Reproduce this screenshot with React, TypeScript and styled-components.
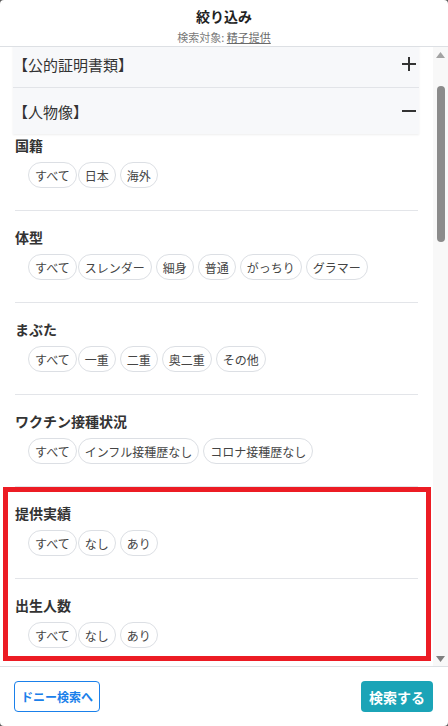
import React from "react";
import styled, { createGlobalStyle } from "styled-components";

const Global = createGlobalStyle`
  html, body { margin: 0; padding: 0; background: #5a5a5a; }
  body { font-family: "Noto Sans CJK JP", "Noto Sans", sans-serif; }
  * { box-sizing: border-box; }
`;

const Modal = styled.div`
  width: 448px;
  height: 726px;
  background: #fff;
  border-radius: 4px;
  display: flex;
  flex-direction: column;
  overflow: hidden;
  color: #333;
`;

const Header = styled.header`
  height: 47px;
  flex: none;
  display: flex;
  flex-direction: column;
  align-items: center;
  padding-top: 7px;
  gap: 4px;
  border-bottom: 1px solid #dde0e4;
`;

const Title = styled.h1`
  margin: 0;
  font-size: 14px;
  line-height: 18px;
  font-weight: 700;
  color: #222;
`;

const Subtitle = styled.div`
  font-size: 11px;
  line-height: 16px;
  color: #7a7a7a;
`;

const TargetLink = styled.span`
  color: #6a6a6a;
  text-decoration: underline;
`;

const Body = styled.div`
  flex: 1;
  min-height: 0;
  display: flex;
`;

const Content = styled.div`
  flex: 1;
  min-width: 0;
  overflow: hidden;
  padding: 0 14px 0 13px;
`;

const Scrolled = styled.div`
  margin-top: -6px;
`;

const Accordion = styled.div`
  background: #f7f8fa;
  box-shadow: 0 1px 2px rgba(0, 0, 0, 0.07);
`;

const AccordionItem = styled.div<{ $divider?: boolean }>`
  height: ${(p) => (p.$divider ? 47 : 46)}px;
  display: flex;
  align-items: center;
  justify-content: space-between;
  padding-right: 2px;
  font-size: 15px;
  color: #333;
  border-bottom: ${(p) => (p.$divider ? "1px solid #e2e4e8" : "none")};
`;

const Section = styled.section<{ $first?: boolean; $last?: boolean }>`
  margin: 0 1px 0 2px;
  padding: ${(p) => (p.$first ? "1px" : "16px")} 0 ${(p) => (p.$last ? "13px" : "22px")};
  border-bottom: ${(p) => (p.$last ? "none" : "1px solid #e3e5e9")};
  display: flex;
  flex-direction: column;
  gap: 7px;
`;

const SectionTitle = styled.h2`
  margin: 0;
  font-size: 14px;
  line-height: 20px;
  font-weight: 700;
  color: #333;
`;

const ChipRow = styled.div`
  display: flex;
  align-items: center;
  gap: 1px;
  padding-left: 13px;
`;

const ChipGroup = styled.div`
  display: flex;
  gap: 4px;
`;

const Chip = styled.button`
  height: 26px;
  padding: 0 6px;
  border: 1px solid #dcdfe4;
  border-radius: 13px;
  background: #fff;
  font-family: inherit;
  font-size: 12px;
  color: #444;
  white-space: nowrap;
`;

const Highlight = styled.div`
  margin: 0 -12px 0 -10px;
  padding: 0 12px 0 10px;
  outline: 5px solid #ec1c24;
  outline-offset: -5px;
`;

const ScrollBar = styled.div`
  width: 15px;
  flex: none;
  background: #f8f8f8;
  display: flex;
  flex-direction: column;
  align-items: center;
`;

const ScrollArrow = styled.div`
  height: 15px;
  width: 15px;
  display: flex;
  align-items: center;
  justify-content: center;
`;

const ScrollTrack = styled.div`
  flex: 1;
  display: flex;
  justify-content: center;
`;

const Thumb = styled.div`
  margin-top: 24px;
  width: 8px;
  height: 156px;
  border-radius: 4px;
  background: #8b8b8b;
`;

const Footer = styled.footer`
  height: 60px;
  flex: none;
  border-top: 1px solid #dde0e4;
  display: flex;
  align-items: center;
  justify-content: space-between;
  padding: 0 15px 0 14px;
`;

const OutlineButton = styled.button`
  height: 31px;
  padding: 0 6px;
  border: 1px solid #1a80ea;
  border-radius: 4px;
  background: #fff;
  color: #1a80ea;
  font-family: inherit;
  font-size: 12px;
  font-weight: 700;
`;

const PrimaryButton = styled.button`
  height: 31px;
  padding: 0 8px;
  border: none;
  border-radius: 4px;
  background: #1ba4b7;
  color: #fff;
  font-family: inherit;
  font-size: 14px;
  font-weight: 700;
`;

const Plus = () => (
  <svg width="16" height="16" viewBox="0 0 16 16">
    <path d="M1 8h14M8 1v14" stroke="#333" strokeWidth="2" fill="none" />
  </svg>
);

const Minus = () => (
  <svg width="16" height="16" viewBox="0 0 16 16">
    <path d="M1 8h14" stroke="#333" strokeWidth="2" fill="none" />
  </svg>
);

const Triangle = ({ up }: { up?: boolean }) => (
  <svg width="9" height="6" viewBox="0 0 9 6">
    <path d={up ? "M4.5 0L9 6H0z" : "M0 0h9L4.5 6z"} fill={up ? "#a3a3a3" : "#7f7f7f"} />
  </svg>
);

type Filter = { title: string; options: string[] };

const filters: Filter[] = [
  { title: "国籍", options: ["日本", "海外"] },
  { title: "体型", options: ["スレンダー", "細身", "普通", "がっちり", "グラマー"] },
  { title: "まぶた", options: ["一重", "二重", "奥二重", "その他"] },
  { title: "ワクチン接種状況", options: ["インフル接種歴なし", "コロナ接種歴なし"] },
];

const highlighted: Filter[] = [
  { title: "提供実績", options: ["なし", "あり"] },
  { title: "出生人数", options: ["なし", "あり"] },
];

const FilterSection = ({ f, first, last }: { f: Filter; first?: boolean; last?: boolean }) => (
  <Section $first={first} $last={last}>
    <SectionTitle>{f.title}</SectionTitle>
    <ChipRow>
      <Chip>すべて</Chip>
      <ChipGroup>
        {f.options.map((o) => (
          <Chip key={o}>{o}</Chip>
        ))}
      </ChipGroup>
    </ChipRow>
  </Section>
);

export default function App() {
  return (
    <>
      <Global />
      <Modal>
        <Header>
          <Title>絞り込み</Title>
          <Subtitle>
            検索対象: <TargetLink>精子提供</TargetLink>
          </Subtitle>
        </Header>
        <Body>
          <Content>
            <Scrolled>
              <Accordion>
                <AccordionItem $divider>
                  <span>【公的証明書類】</span>
                  <Plus />
                </AccordionItem>
                <AccordionItem>
                  <span>【人物像】</span>
                  <Minus />
                </AccordionItem>
              </Accordion>
              {filters.map((f, i) => (
                <FilterSection key={f.title} f={f} first={i === 0} />
              ))}
              <Highlight>
                {highlighted.map((f, i) => (
                  <FilterSection key={f.title} f={f} last={i === highlighted.length - 1} />
                ))}
              </Highlight>
            </Scrolled>
          </Content>
          <ScrollBar>
            <ScrollArrow>
              <Triangle up />
            </ScrollArrow>
            <ScrollTrack>
              <Thumb />
            </ScrollTrack>
            <ScrollArrow>
              <Triangle />
            </ScrollArrow>
          </ScrollBar>
        </Body>
        <Footer>
          <OutlineButton>ドニー検索へ</OutlineButton>
          <PrimaryButton>検索する</PrimaryButton>
        </Footer>
      </Modal>
    </>
  );
}
